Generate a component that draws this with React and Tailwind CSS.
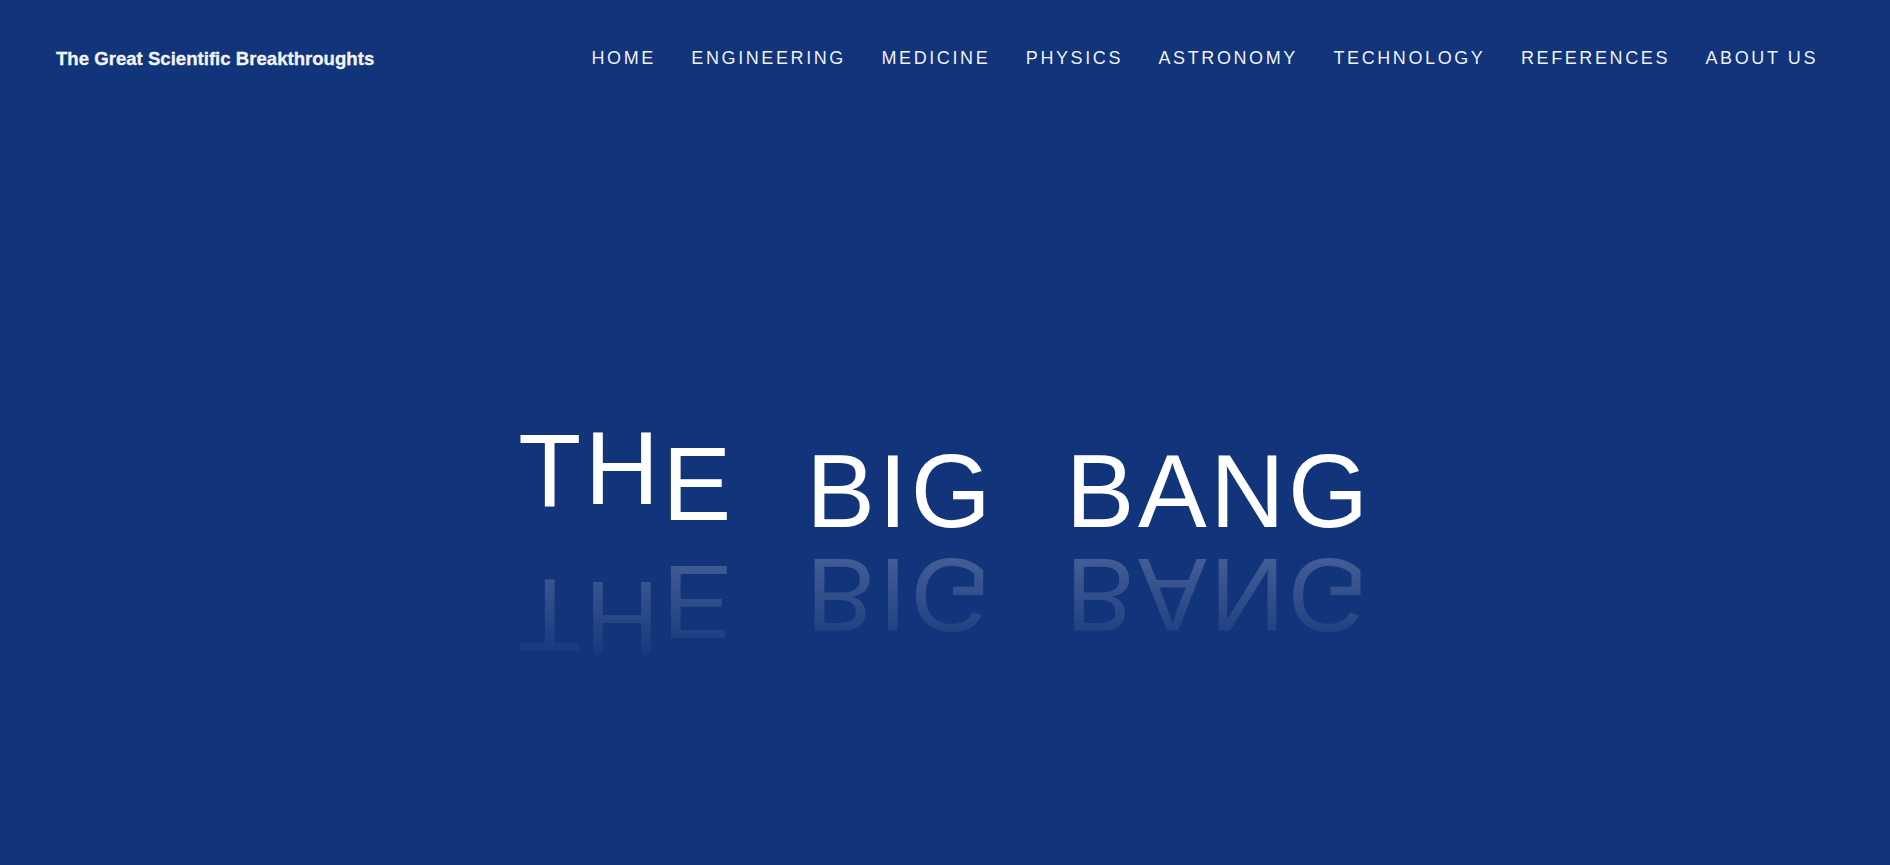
import React from 'react';

const NAV_LINKS = ['Home', 'Engineering', 'Medicine', 'Physics', 'Astronomy', 'Technology', 'References', 'About us'];

const WORDS = [
  [
    { ch: 'T', cls: '-translate-y-[20px]' },
    { ch: 'H', cls: '-translate-y-[23px]' },
    { ch: 'E', cls: '-translate-y-[7px]' },
  ],
  [{ ch: 'B' }, { ch: 'I' }, { ch: 'G' }],
  [{ ch: 'B' }, { ch: 'A' }, { ch: 'N' }, { ch: 'G' }],
];

function TitleRow() {
  return (
    <div className="flex justify-center gap-[71.5px] text-[103px] leading-none font-normal text-white">
      {WORDS.map((word, wi) => (
        <div key={wi} className="flex">
          {word.map((l, li) => (
            <span key={li} className={`inline-block tracking-[3.5px] ${l.cls || ''}`}>
              {l.ch}
            </span>
          ))}
        </div>
      ))}
    </div>
  );
}

export default function App() {
  return (
    <div className="min-h-screen w-full bg-[#12347a] font-['Liberation_Sans',Arial,sans-serif] text-white">
      {/* Header */}
      <header className="flex items-center h-[117px] pl-[56px] pr-[72px]">
        <a href="#" className="text-[18.6px] font-bold text-white/95 [-webkit-text-stroke:0.3px_white]">
          The Great Scientific Breakthroughts
        </a>
        <nav className="ml-auto">
          <ul className="flex items-center gap-[35.5px]">
            {NAV_LINKS.map((link) => (
              <li key={link}>
                <a href="#" className="text-[18px] uppercase tracking-[2.6px] text-white/95">
                  {link}
                </a>
              </li>
            ))}
          </ul>
        </nav>
      </header>

      {/* Hero */}
      <main className="pt-[322.5px] pb-[120px]">
        <h1>
          <TitleRow />
        </h1>
        <div
          aria-hidden="true"
          className="pb-[20px] [mask-image:linear-gradient(to_bottom,rgba(0,0,0,0.24),rgba(0,0,0,0))]"
        >
          <div className="-scale-y-100">
            <TitleRow />
          </div>
        </div>
      </main>
    </div>
  );
}
